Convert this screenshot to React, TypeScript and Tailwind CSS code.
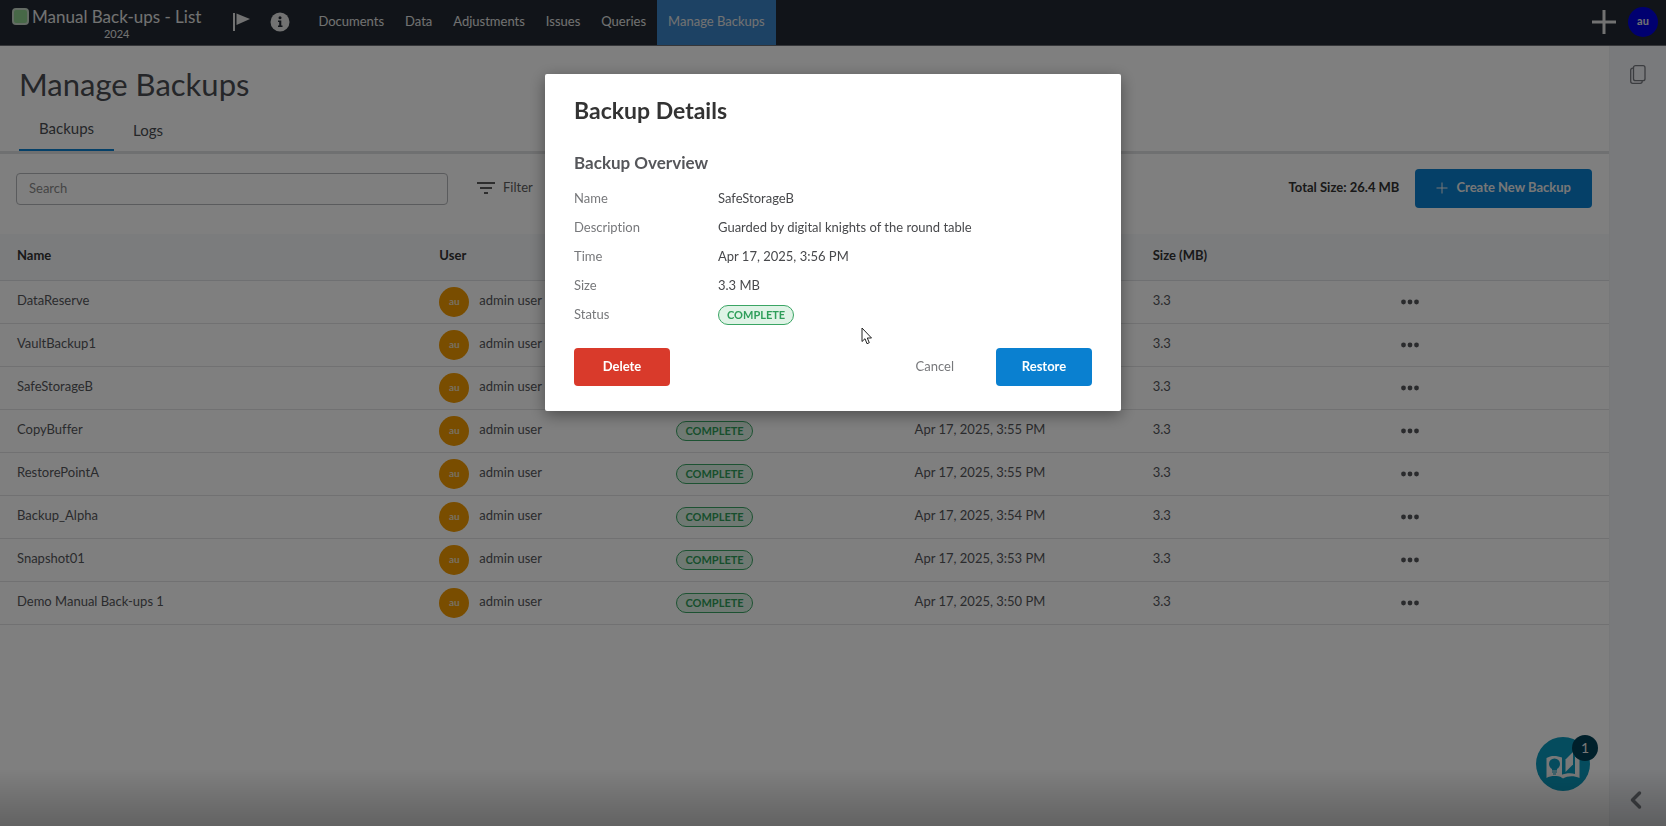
import { ChevronLeft } from "lucide-react";

const navItems = ["Documents", "Data", "Adjustments", "Issues", "Queries"];

const backups = [
  { name: "DataReserve", time: "Apr 17, 2025, 3:57 PM" },
  { name: "VaultBackup1", time: "Apr 17, 2025, 3:56 PM" },
  { name: "SafeStorageB", time: "Apr 17, 2025, 3:56 PM" },
  { name: "CopyBuffer", time: "Apr 17, 2025, 3:55 PM" },
  { name: "RestorePointA", time: "Apr 17, 2025, 3:55 PM" },
  { name: "Backup_Alpha", time: "Apr 17, 2025, 3:54 PM" },
  { name: "Snapshot01", time: "Apr 17, 2025, 3:53 PM" },
  { name: "Demo Manual Back-ups 1", time: "Apr 17, 2025, 3:50 PM" },
];

function StatusBadge() {
  return (
    <span className="inline-flex h-5 items-center rounded-full border border-[#3aa564] bg-[#dff3e6] px-2 pb-px text-[11px] font-bold leading-none text-[#2f9e5a]">
      COMPLETE
    </span>
  );
}

function TopBar() {
  return (
    <header className="flex h-[46px] items-stretch border-b border-[#6a6d72] bg-[#222932] text-[#e4e4e4]">
      <div className="flex items-start pl-3 pt-2">
        <span className="size-[17px] rounded border-2 border-[#c8d8c8] bg-[#8fd08f]" />
        <div className="ml-[3px] text-center">
          <div className="text-[17px] leading-[18px]">Manual Back-ups - List</div>
          <div className="text-[11px] leading-4">2024</div>
        </div>
      </div>
      <div className="ml-8 flex items-center gap-5 pb-0.5">
        <button aria-label="Flag">
          <svg width="17" height="18" viewBox="0 0 17 18" fill="currentColor">
            <rect x="0" y="0" width="2" height="18" />
            <path d="M3.500 0.500 17 6 3.500 12Z" />
          </svg>
        </button>
        <button aria-label="Information">
          <svg width="20" height="20" viewBox="0 0 20 20">
            <circle cx="10" cy="10" r="9.500" fill="currentColor" />
            <circle cx="10" cy="5.700" r="1.500" fill="#222932" />
            <path d="M8 8.500h3.300v5H12.500V15H8v-1.500h1.200V10H8Z" fill="#222932" />
          </svg>
        </button>
      </div>
      <nav className="ml-[18px] flex items-stretch gap-px text-[13px]">
        {navItems.map((item) => (
          <a key={item} href="#" className="flex items-center px-[10px] pb-0.5">
            {item}
          </a>
        ))}
        <a href="#" className="flex items-center bg-[#3b85c8] px-[11px] pb-0.5">
          Manage Backups
        </a>
      </nav>
      <div className="ml-auto flex items-center gap-3 pr-2 pb-0.5">
        <button aria-label="Add">
          <svg width="24" height="24" viewBox="0 0 24 24" stroke="currentColor" strokeWidth="3">
            <path d="M12 0v24M0 12h24" />
          </svg>
        </button>
        <button className="size-[30px] rounded-full bg-[#0000e0] text-[11px] font-bold">au</button>
      </div>
    </header>
  );
}

function Toolbar() {
  return (
    <div className="flex items-center px-4 pt-[15px] pb-[26px]">
      <input
        type="search"
        aria-label="Search"
        placeholder="Search"
        className="h-8 w-[432px] rounded border border-[#b4b6ba] bg-white px-3 pb-0.5 text-[13px] placeholder:text-[#8a8a8a]"
      />
      <button className="ml-[29px] flex items-center gap-2 pb-0.5 text-[13px] text-[#5c5c5c]">
        <svg width="18" height="12" viewBox="0 0 18 12" fill="currentColor">
          <rect width="18" height="2" />
          <rect x="3" y="5" width="12" height="2" />
          <rect x="7" y="10" width="4" height="2" />
        </svg>
        Filter
      </button>
      <span className="ml-auto pb-0.5 text-[13px] font-bold text-[#333]">Total Size: 26.4 MB</span>
      <button className="ml-4 mr-px flex h-[39px] items-center gap-2 rounded bg-[#0a80d0] px-[21px] pb-0.5 text-[13px] font-bold text-[#eee]">
        <svg width="12" height="12" viewBox="0 0 12 12" stroke="currentColor">
          <path d="M6 0.500v11M0.500 6h11" />
        </svg>
        Create New Backup
      </button>
    </div>
  );
}

function BackupTable() {
  return (
    <table className="w-full table-fixed text-left text-[13px] text-[#55565a]">
      <thead>
        <tr className="h-[46px] border-b border-[#dfe1e4] bg-[#f6f8fb] text-[#333]">
          <th className="w-[26.25%] px-4 pb-0.5 pl-[17px]">Name</th>
          <th className="w-[14.8%] px-4 pb-0.5 pl-[17px]">User</th>
          <th className="w-[14.8%] px-4 pb-0.5">Status</th>
          <th className="w-[14.8%] px-4 pb-0.5">Time</th>
          <th className="w-[15.4%] px-4 pb-0.5">Size (MB)</th>
          <th className="px-4" aria-label="Actions" />
        </tr>
      </thead>
      <tbody>
        {backups.map((backup) => (
          <tr key={backup.name} className="h-[43px] border-b border-[#e2e3e4]">
            <td className="px-4 pb-px pl-[17px]">{backup.name}</td>
            <td className="px-4 pl-[17px]">
              <div className="flex items-center gap-[10px]">
                <span className="flex size-[30px] items-center justify-center rounded-full bg-[#f29a00] text-[10px] font-bold text-[#f0e0c0]">
                  au
                </span>
                <span className="pb-px">admin user</span>
              </div>
            </td>
            <td className="px-4">
              <StatusBadge />
            </td>
            <td className="px-4 pb-px">{backup.time}</td>
            <td className="px-4 pb-px">3.3</td>
            <td className="px-4">
              <button aria-label={`Actions for ${backup.name}`} className="block">
                <svg width="18" height="6" viewBox="0 0 18 6" fill="#55565a">
                  <circle cx="2.500" cy="3" r="2.400" />
                  <circle cx="9" cy="3" r="2.400" />
                  <circle cx="15.500" cy="3" r="2.400" />
                </svg>
              </button>
            </td>
          </tr>
        ))}
      </tbody>
    </table>
  );
}

function SideRail() {
  return (
    <aside className="flex w-[57px] flex-col items-center justify-between border-l border-[#eef0f2] bg-[#f3f4f8] pt-[19px] pb-3 text-[#777a80]">
      <button aria-label="Copy">
        <svg width="16" height="19" viewBox="0 0 16 19" fill="none" stroke="currentColor" strokeWidth="1.300">
          <rect x="3.500" y="0.700" width="11.500" height="15" rx="2" />
          <path d="M3.500 3.200h-.8a2 2 0 0 0-2 2V16.300a2 2 0 0 0 2 2h7.500a2 2 0 0 0 2-2v-.6" />
        </svg>
      </button>
      <button aria-label="Expand panel" className="mr-1">
        <ChevronLeft size={28} strokeWidth={3} />
      </button>
    </aside>
  );
}

/** Floating help launcher with its unread count. */
function HelpLauncher() {
  return (
    <button aria-label="Help, 1 new" className="fixed right-[76px] bottom-[35px] size-[54px] rounded-full bg-[#0a98bc]">
      <svg width="54" height="54" viewBox="0 0 54 54">
        <path d="M10.500 21C15 18 21 18.500 26 20.500V40.500C21 38.500 15 38.500 10.500 41Z" fill="#f0f0f0" />
        <path d="M29.500 22.500 37 15V27.500L29.500 35Z" fill="#f0f0f0" />
        <path d="M39 20H43.500V41C38 38.500 32 38.500 27 41.500L25 40V38C30 36 35 35.500 39 37Z" fill="#f0f0f0" />
        <circle cx="18.500" cy="27" r="5.500" fill="#0a98bc" />
        <path d="M16 31h5v2.500h-5ZM16 34.500h5v1h-5ZM17 36.500h3v1h-3Z" fill="#0a98bc" />
      </svg>
      <span className="absolute -top-0.5 -right-2 flex size-[26px] items-center justify-center rounded-full bg-[#004056] text-sm text-[#eee]">
        1
      </span>
    </button>
  );
}

const details = [
  ["Name", "SafeStorageB"],
  ["Description", "Guarded by digital knights of the round table"],
  ["Time", "Apr 17, 2025, 3:56 PM"],
  ["Size", "3.3 MB"],
];

function BackupDetailsDialog() {
  return (
    <div
      role="dialog"
      aria-modal="true"
      aria-labelledby="dialog-title"
      className="relative w-[576px] rounded-xs bg-white px-[29px] pt-[21px] pb-[25px] shadow-[0_4px_16px_rgba(0,0,0,0.4)]"
    >
      <h2 id="dialog-title" className="text-[23px] leading-[30px] font-bold text-[#333]">
        Backup Details
      </h2>
      <h3 className="mt-[26px] text-[17px] leading-6 font-bold text-[#55565a]">Backup Overview</h3>
      <dl className="mt-[9px] grid grid-cols-[144px_1fr] auto-rows-[29px] items-center text-[13px] text-[#48494c]">
        {details.map(([label, value]) => (
          <div key={label} className="contents">
            <dt className="text-[#77787b]">{label}</dt>
            <dd>{value}</dd>
          </div>
        ))}
        <dt className="text-[#77787b]">Status</dt>
        <dd className="flex">
          <StatusBadge />
        </dd>
      </dl>
      <div className="mt-[19px] flex h-[38px] items-stretch text-[13px]">
        <button className="w-24 rounded bg-[#d93a2b] font-bold text-white">Delete</button>
        <button className="ml-auto px-[42px] text-[#77787b]">Cancel</button>
        <button className="w-24 rounded bg-[#0a80d0] font-bold text-white">Restore</button>
      </div>
      <svg className="absolute top-[253px] left-[316px]" width="12" height="18" viewBox="0 0 12 18">
        <path d="M1 1v13.500l3-2.800 2 5 2.300-1-2-4.700H10.500Z" fill="#fff" stroke="#222" />
      </svg>
    </div>
  );
}

export default function App() {
  return (
    <div className="flex min-h-screen flex-col bg-white font-[Lato,sans-serif] [font-variant-ligatures:none]">
      <TopBar />
      <div className="flex flex-1">
        <main className="min-w-0 flex-1">
          <div className="border-b-3 border-[#dfe0e2] pl-[19px]">
            <h1 className="pt-[18px] text-[31px] leading-10 text-[#4a4d52]">Manage Backups</h1>
            <div role="tablist" className="mt-[5px] flex h-[42px] items-stretch text-[15px] text-[#4a4d52]">
              <button role="tab" aria-selected="true" className="border-b-2 border-[#0a80d0] px-5 pb-0.5">
                Backups
              </button>
              <button role="tab" aria-selected="false" className="px-[19px]">
                Logs
              </button>
            </div>
          </div>
          <Toolbar />
          <BackupTable />
        </main>
        <SideRail />
      </div>
      <HelpLauncher />
      <div className="fixed inset-0 flex items-start justify-center bg-black/50 pt-[74px]">
        <BackupDetailsDialog />
      </div>
      <div className="pointer-events-none fixed inset-x-0 bottom-0 h-14 bg-linear-to-b from-transparent to-black/22" />
    </div>
  );
}
